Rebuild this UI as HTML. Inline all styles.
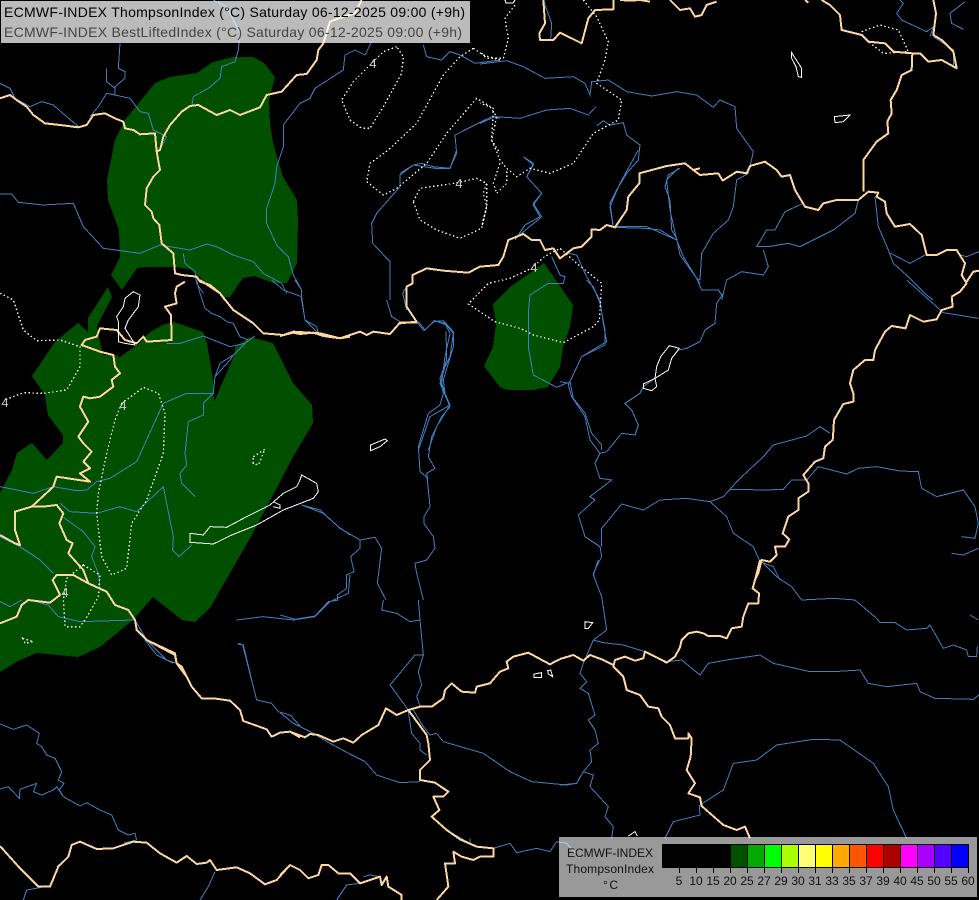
<!DOCTYPE html>
<html><head><meta charset="utf-8"><style>
html,body{margin:0;padding:0;background:#000;width:979px;height:900px;overflow:hidden}
svg{display:block}
path{fill:none;vector-effect:non-scaling-stroke;shape-rendering:crispEdges}
.g path{fill:#005000;stroke:none}
.r path{stroke:#3f7fc4;stroke-width:1}
.b path{stroke:#fdd6a0;stroke-width:2;stroke-linejoin:round}
.w path{stroke:#fff;stroke-width:1}
.d path{stroke:#fff;stroke-width:1.3;stroke-dasharray:1.5 2.5}
text{font-family:"Liberation Sans",sans-serif}
.l{font-size:13px;fill:#ccc;text-anchor:middle}
.t{font-size:12px;fill:#111;text-anchor:middle}
</style></head><body>
<svg width="979" height="900" viewBox="0 0 979 900" xmlns="http://www.w3.org/2000/svg">
<rect width="979" height="900" fill="#000"/>
<g class="g">
<path d="M233,57L253,57 264,63 275,77 269,100 270,123 273,143 283,177 297,200 298,220 297,263 287,283 273,283 255,276 243,278 230,297 222,297 213,287 205,282 192,270 177,267 147,267 137,268 122,290 111,275 120,257 119,230 108,200 107,180 115,140 125,120 155,83 170,77 197,73 213,62Z"/>
<path d="M108,287L112,297 97,326 99,337 103,355 113,355 120,357 137,345 150,332 163,325 173,322 203,332 207,343 213,380 214,402 235,354 235,347 250,337 273,343 293,383 312,405 313,423 293,457 253,533 210,608 195,622 182,620 153,597 133,620 100,647 78,657 37,653 20,660 0,672 0,493 12,470 17,453 32,443 47,460 63,443 63,435 48,415 45,395 32,376 55,342 78,323 88,332 88,318Z"/>
<path d="M544,263L573,305 570,327 563,347 560,367 548,387 533,390 508,390 500,387 484,366 493,347 496,323 493,304 510,287 533,271Z"/>
</g>

<g class="r">
<g transform="scale(.33333)">
<path d="M640,0L680,20 720,100 715,150 705,185 665,200 660,235 625,265 580,290 575,320"/>
<path d="M0,250L30,265 45,295 90,320 125,305 160,315 235,380"/>
<path d="M360,130L355,205 375,215 375,235 345,260 345,285 320,280 295,320 270,350"/>
<path d="M320,205L320,245 345,265"/>
<path d="M345,285L390,295 420,335 445,340 460,390 500,410 480,450"/>
<path d="M0,582L35,582 55,607 130,615 220,610 250,680 310,745 420,760 480,735 570,750 620,732 650,740 700,765 760,785 790,820 845,850 860,880"/>
<path d="M550,760L555,790 585,815 590,850 610,880"/>
<path d="M1115,125L1095,165 1065,150 1035,165 1030,210 945,265 930,295 900,310 850,375 850,440 830,500 825,550 800,625 800,670 830,735 865,770 880,825 905,870 905,900"/>
<path d="M1270,135L1280,170 1325,180 1350,155 1380,165 1425,190 1500,180"/>
<path d="M1500,355L1475,350 1430,372 1365,405 1370,460 1350,505 1300,500 1265,490 1240,495 1200,525 1200,560 1130,640 1115,670 1118,730 1170,785 1170,900"/>
</g>
<g transform="translate(480 0) scale(.33333)">
<path d="M0,192L80,182 130,200 195,235 280,230 315,250 330,285 335,245 385,240 440,275 515,288 590,275 650,285 700,322 720,300 765,320 770,385 820,455 805,520 770,540 760,620 745,660 700,700 665,760 660,840 650,835 600,765 590,715 575,690 570,600 555,560 565,525 600,505"/>
<path d="M0,370L45,350 120,355 200,330 270,325 325,345 348,320"/>
<path d="M350,378L370,362 390,375 430,368 440,405 480,435 475,480 440,520 410,570 390,610 400,680"/>
<path d="M400,680L500,680 590,720"/>
<path d="M110,712L185,650 160,610 185,580 140,530 160,490 130,470"/>
<path d="M190,0L215,70 212,115"/>
<path d="M1135,600L1125,640 1060,690 960,740 925,730 865,740 830,740 860,690 885,690 915,635 965,612"/>
<path d="M850,750L865,800 850,825 785,815 740,840 725,900"/>
<path d="M650,835L665,870 715,870 725,885"/>
<path d="M1185,590L1195,680 1225,750 1240,790 1285,830 1340,885 1360,900"/>
<path d="M1232,760L1290,790 1335,765"/>
<path d="M1440,765L1460,770 1497,755"/>
<path d="M1260,0L1270,10 1250,40 1265,60 1340,95 1360,80 1350,110"/>
<path d="M1455,5L1410,40 1415,70 1450,88"/>
<path d="M1360,110L1420,150 1420,200"/>
</g>
<g transform="translate(400 150) scale(.33333)">
<path d="M0,70L40,45 105,55 150,55 170,0"/>
<path d="M370,20L400,45 380,80 425,130 400,165 420,200 375,225 345,270"/>
<path d="M455,320L480,375 495,380 490,400 445,400 390,435 385,490 385,590 400,675 470,712 510,695"/>
<path d="M505,310L530,315 555,370 580,415 600,450 610,520 620,575 545,620 510,695 520,745 555,790 575,850 605,885 605,900"/>
<path d="M20,410L8,430 20,480"/>
<path d="M55,515L75,540 100,515 130,512 160,545 160,590 130,690 135,730 150,765 90,800 55,900"/>
<path d="M100,512L135,520 150,550 135,620 125,700 135,730"/>
<path d="M150,765L110,830 85,900"/>
<path d="M640,232L630,170 660,100 715,0"/>
<path d="M640,232L735,235 780,240 830,270 850,320 890,385 900,400"/>
<path d="M830,270L810,180 800,90 835,55"/>
</g>
<g transform="translate(560 280) scale(.33333)">
<path d="M490,40L470,70 465,130 435,150 420,185 380,205 355,210 335,235 325,270 285,295 250,320 240,340 195,370 215,390 235,435 225,465 185,460 140,515 120,520 90,480 75,410 35,350 25,315 65,230 135,195 135,150 120,70 100,20 80,0"/>
<path d="M120,520L105,550 120,595 155,600 90,650 105,660 55,705 75,770 120,800 125,830 100,880 105,900"/>
<path d="M125,800L125,745 185,672 250,690 300,660 380,655 450,665 490,650 535,600 610,530 640,495 740,468 780,440 810,460"/>
<path d="M450,665L500,710 520,760 580,800 600,845 640,860 660,900"/>
<path d="M510,628L620,630 670,628 695,600 740,600 775,560 860,582 895,565 950,560 1020,573 1075,575 1085,625 1130,650 1210,630 1245,680 1255,730 1245,775 1205,770"/>
<path d="M1175,820L1210,825 1255,805"/>
<path d="M1040,0L1130,80 1150,98 1255,115"/>
<path d="M0,305L25,310"/>
</g>
<g transform="translate(560 560) scale(.33333)">
<path d="M115,0L100,45 125,110 140,210 100,240 70,310 60,340 80,365 60,385 85,400 105,465 85,480 105,510 115,550 90,570 95,605 70,635 50,670 0,675"/>
<path d="M100,240L130,248 190,255 255,275 320,305 365,300 420,345 445,310 500,300 600,285 640,310 750,335 820,335 900,330 925,370 980,380 1070,370 1080,395 1125,415 1240,418 1257,405"/>
<path d="M605,5L650,50 695,80 725,120 820,115 885,120 950,175 960,188 1005,188 1040,210 1100,205 1110,195 1150,265 1180,255 1220,270 1225,290 1250,290 1252,260"/>
<path d="M1230,165L1255,180"/>
<path d="M70,635L100,645 90,680 145,740 135,770 160,800 155,835"/>
<path d="M420,735L490,690 520,610 590,600 650,555 760,538 840,540 940,610 985,680 1000,750 1040,835"/>
<path d="M418,735L420,765 340,785 315,835"/>
</g>
<g transform="translate(280 300) scale(.33333)">
<path d="M65,0L75,60 115,100"/>
<path d="M320,0L335,50 360,65"/>
<path d="M412,68L432,92 465,62 500,75 520,100 510,170 495,200 480,250 510,320 485,350 455,410 445,470 465,505 440,520 450,620 432,650 432,670 460,710 465,745 440,780 405,790 410,820 430,900"/>
<path d="M498,95L500,180 480,235 490,280 480,315 445,340 415,440 420,515 445,535"/>
<path d="M65,615L130,640 180,685 240,720 285,712 305,745 292,850 318,900"/>
<path d="M240,720L240,745 212,770 222,815 200,825 200,865 172,885 172,900"/>
</g>
<g transform="translate(0 280) scale(.33333)">
<path d="M0,620L100,640 160,620 230,632 260,630 290,605 330,595 410,545 460,435 490,370 560,340 640,340 645,290 660,250 700,225 745,180"/>
<path d="M640,340L610,370 610,405 565,425 555,520 560,555 540,580 545,610 585,650"/>
<path d="M500,190L540,190 610,168 690,200 735,190 765,168"/>
<path d="M645,290L690,240 700,225"/>
<path d="M0,965L30,980 65,960"/>
<path d="M0,770L60,800 120,840 160,880"/>
<path d="M180,670L210,695 290,700 360,680 410,695 490,620 520,770 518,810 537,830 575,795"/>
<path d="M190,712L250,755 285,800 275,830 295,880 300,925"/>
<path d="M90,960L145,975 175,1010 240,1025 405,1020"/>
<path d="M1050,885L1045,940 990,965 945,1010 880,1020 790,1010 710,1020"/>
<path d="M715,1090L730,1095 755,1200"/>
<path d="M905,675L960,690 1015,740 1050,765"/>
<path d="M405,1020L440,1080 500,1140 530,1150"/>
<path d="M590,0L600,40 615,85 635,100 660,110 680,125 700,130 720,170 745,180"/>
<path d="M815,0L850,30 905,50 915,120 950,140 955,160"/>
<path d="M885,0L905,30"/>
</g>
<g transform="translate(0 640) scale(.33333)">
<path d="M435,0L470,45 520,70"/>
<path d="M712,12L728,15 770,180 815,190 835,215 870,225 900,258"/>
<path d="M0,252L40,268 80,255 118,280 110,310 125,320 140,345 165,355 185,395 175,420 192,430 178,450 190,470 240,498 260,488 300,510 335,525 355,570 385,585 405,580 410,600 370,610"/>
<path d="M0,447L25,440 58,475 60,448 110,430 100,455 125,465 160,450 170,440 190,470"/>
<path d="M170,680L205,650"/>
<path d="M70,780L80,750 125,742"/>
<path d="M600,780L625,740 645,695"/>
</g>
<g transform="translate(280 600) scale(.33333)">
<path d="M0,45L45,58 105,48 145,5 175,0"/>
<path d="M310,0L305,30 350,40 390,65 420,60 415,0"/>
<path d="M420,60L430,165 405,165 330,255 385,330"/>
<path d="M430,165L415,215 425,255 410,290 420,318"/>
<path d="M0,338L40,370 100,400 150,430 215,465 255,485 290,525 360,548 420,545"/>
<path d="M385,335L395,400 420,430 420,450 440,465"/>
<path d="M400,330L430,380 450,405 470,400 490,425 610,460 690,515 755,545 860,555 890,550 900,530"/>
<path d="M460,590L478,630 455,650 500,690 570,730 570,715"/>
<path d="M640,745L690,730 710,758 770,745 810,755 830,725 860,730 900,775"/>
<path d="M250,830L270,825 300,830"/>
<path d="M170,900L200,855 240,850"/>
</g>
</g>

<g class="d">
<g transform="scale(.33333)">
<path d="M1190,140L1150,155 1100,205 1060,245 1025,300 1050,360 1085,385 1110,385 1150,320 1205,220 1210,170Z"/>
<path d="M1420,145L1380,170 1330,225 1250,370 1165,450 1110,490 1100,545 1150,585 1190,565 1280,490 1340,400 1430,295 1480,325 1475,420 1500,460"/>
<path d="M1420,145L1450,165 1500,180"/>
</g>
<g transform="translate(480 0) scale(.33333)">
<path d="M105,15L75,55 85,115 70,175 20,175 0,155"/>
<path d="M310,0L350,50 385,125 375,180 350,250 425,300 415,360 340,400 280,490 210,520 150,505 110,530 80,505 60,480 35,420 50,350 30,320 0,310"/>
<path d="M60,490L40,550 50,580 80,550 80,510"/>
<path d="M0,540L20,550 20,620 5,680"/>
<path d="M1145,95L1200,75 1255,90 1285,155 1210,160 1165,125"/>
</g>
<g transform="translate(400 150) scale(.33333)">
<path d="M40,155L60,115 175,98 230,85 260,100 250,130 260,170 245,235 180,265 110,240 60,210Z"/>
<path d="M433,320L395,355 330,385 265,400 205,462 285,515 360,535 400,555 490,578 580,530 598,510 605,400 530,340 480,295Z"/>
</g>
<g transform="translate(0 280) scale(.33333)">
<path d="M0,40L40,60 70,150 110,182 180,180 240,200 240,260 200,330 130,340 70,338 15,360"/>
<path d="M365,370L345,420 320,520 295,640 290,700 305,830 335,885 380,865 395,730 440,660 490,520 495,400 475,340 430,322Z"/>
<path d="M760,530L795,508 775,555 760,550Z"/>
<path d="M250,855L300,885 295,950 255,1020 240,1040 195,1040 190,960 200,895Z"/>
<path d="M68,1075L100,1085 75,1090Z"/>
</g>
</g>

<g class="b">
<g transform="scale(.33333)">
<path d="M0,295L30,285 50,300 80,320 100,345 135,370 180,375 235,382 260,375 280,345 315,340 345,355 370,365 375,385 400,390 420,403 465,400 470,455 478,500 480,510 460,530 440,565 435,615 455,635 460,655 478,675 485,730 520,760 525,820 545,825 590,830 600,845 630,855 660,880 675,900"/>
<path d="M470,455L480,450 490,410 510,375 545,335 570,318 595,315 650,345 690,330 720,345 780,322 800,285 845,275 890,225 920,222 950,180 955,150 970,130 990,65 1030,50 1065,40 1085,0"/>
</g>
<g transform="translate(0 280) scale(.33333)">
<path d="M555,5L530,20 525,40 530,70 495,80 513,105 515,180 440,185 430,170 410,190 375,180 350,150 300,145 290,170 255,180 245,195 300,215 340,225 345,260 360,280 335,300 340,320 300,350 270,355 250,350 240,380 265,425 235,470 250,490 275,515 250,545 270,565 240,580 270,605 170,590 160,620 95,680 45,695 45,750 60,795 45,790 0,765"/>
<path d="M95,680L130,680 170,675 190,700 178,730 200,780 218,790 205,820 250,870 265,910 320,935 345,975 385,990 405,1020 410,1050 440,1080 525,1125 530,1150 560,1190 565,1200"/>
<path d="M265,910L220,885 170,885 158,900 180,945 150,968 85,960 65,975 50,1010 0,1030"/>
<path d="M600,0L660,40 700,90 760,130 790,160 850,165 880,155 960,160 1020,175 1050,170"/>
</g>
<g transform="translate(280 300) scale(.33333)">
<path d="M0,108L40,98 60,102 100,98 130,108 180,115 240,95 260,105 280,95 330,102 360,68 412,68"/>
</g>
<g transform="translate(400 150) scale(.33333)">
<path d="M0,520L50,515 20,470 20,410 38,400 38,375 80,355 130,362 205,368 240,350 295,345 310,320 325,270 370,252 395,270 420,270 435,300 460,295 480,325 520,295 545,290 575,260 575,238 600,240 620,225 645,232 680,180 685,140 718,100 718,70 800,48 855,40 880,60 900,55"/>
</g>
<g transform="translate(480 0) scale(.33333)">
<path d="M615,490L640,510 660,525 715,520 728,542 770,515 800,520 810,498 855,485 890,510 905,530 930,525 945,570 975,620 1015,630 1030,610 1070,600 1135,600 1165,575 1195,578 1190,590 1215,605 1220,640 1245,680 1290,672 1325,705 1340,765 1370,765 1400,750 1430,750 1455,790 1445,825 1460,850 1440,875 1415,890"/>
<path d="M1460,845L1480,815 1497,812"/>
<path d="M1150,575L1150,480 1190,425 1225,400 1222,365 1235,340 1232,300 1250,270 1265,225 1295,210 1297,160 1240,155 1215,130 1165,125 1145,105 1085,90 1080,45 1050,15 1025,0"/>
<path d="M1297,160L1320,160 1345,185 1385,180 1430,205 1420,155 1385,120 1360,105 1368,40 1360,0"/>
<path d="M570,0L600,30 630,25 645,50 665,45 680,15 710,5"/>
<path d="M400,0L400,28 345,30 325,55 305,130 275,115 240,98 220,120 180,120 178,100 195,70 190,0"/>
<path d="M420,0L450,2 480,0 510,5"/>
<path d="M975,0L985,8"/>
</g>
<g transform="translate(560 280) scale(.33333)">
<path d="M1175,50L1178,80 1145,90 1130,118 1090,125 1050,105 1037,145 995,138 975,155 945,210 940,240 915,240 880,270 870,310 880,340 880,365 850,372 822,420 820,455 818,480 795,500 790,535 765,545 730,585 745,610 745,635 715,655 715,690 685,710 668,760 688,778 675,800 645,800 650,825 630,845 605,840 595,880 585,900"/>
</g>
<g transform="translate(560 560) scale(.33333)">
<path d="M600,0L585,60 578,85 597,100 595,130 565,130 550,170 545,200 515,205 500,235 480,228 445,228 430,220 410,215 385,220 365,240 360,262 345,290 320,308 290,292 255,275 250,295 225,302 195,290 165,300 160,320 190,350 200,390 240,405 265,440 295,445 305,470 330,495 345,535 385,535 385,520 395,535 392,590 380,630 405,670 385,700 420,712 425,738 490,795 530,810 555,800 570,835"/>
<path d="M160,315L125,298 90,285 70,302 40,285 0,297"/>
</g>
<g transform="translate(280 600) scale(.33333)">
<path d="M840,177L810,193 745,158 700,170 680,185 685,205 660,215 630,250 590,260 585,278 545,275 515,250 495,270 490,295 455,320 420,320 385,330 350,345 318,325 295,375 245,405 220,428 190,415 160,425 115,405 90,402 75,412 30,395 0,398"/>
<path d="M385,330L440,405 445,430 450,480 420,510 420,540 465,548 505,575 490,590 460,590 478,630 455,650 500,690 540,718 590,740 640,745 640,770 600,770 580,780 545,770 520,755 525,790 495,790 505,860 470,900"/>
<path d="M0,825L30,795 60,810 85,835 115,825 125,795 145,795 175,820 210,820 240,850 300,830 305,855 320,830 325,860 365,885 365,900"/>
</g>
<g transform="translate(0 640) scale(.33333)">
<path d="M440,0L525,40 530,70 545,80 560,110 575,140 605,175 640,175 690,182 720,210 730,243 800,268 815,290 840,278 870,275 900,292"/>
<path d="M0,618L60,685 115,740 150,740 175,680 205,650 215,615 240,605 290,627 340,625 400,605 440,608 480,640 530,668 560,648 590,672 620,668 630,660 650,690 710,682 750,700 795,733 830,720 870,675 900,690"/>
</g>
</g>

<g class="w">
<path d="M505,0L506,3 513,3 515,0"/>
<g transform="translate(0 280) scale(.33333)">
<path d="M400,35L420,45 415,80 385,120 375,145 400,185 405,195 375,190 355,185 355,125 350,110 370,80 375,55Z"/>
<path d="M905,585L950,610 955,635 940,655 850,690 770,735 695,765 640,792 570,787 570,760 610,765 630,740 680,742 740,710 810,675 850,640 890,620 900,600Z"/>
<path d="M820,665L840,675 840,685 820,680"/>
</g>
<g transform="translate(280 300) scale(.33333)">
<path d="M272,435L315,417 322,422 300,440 272,452Z"/>
</g>
<g transform="translate(480 0) scale(.33333)">
<path d="M935,158L965,205 965,232 955,230 948,200 935,175Z"/>
<path d="M1063,350L1110,345 1090,365 1065,368Z"/>
</g>
<g transform="translate(560 280) scale(.33333)">
<path d="M328,197L358,205 335,235 325,270 285,295 290,320 275,332 250,325 250,312 285,295 290,260 302,230Z"/>
</g>
<g transform="translate(560 560) scale(.33333)">
<path d="M75,185L98,188 85,205 75,205Z"/>
<path d="M205,828L225,815 232,828"/>
</g>
<g transform="translate(280 600) scale(.33333)">
<path d="M762,222L785,218 785,232 762,232Z"/>
<path d="M803,212L812,210 818,230 805,222Z"/>
</g>
</g>

<text class="l" x="373" y="68">4</text>
<text class="l" x="459" y="188">4</text>
<text class="l" x="534" y="272">4</text>
<text class="l" x="5" y="407">4</text>
<text class="l" x="123" y="410">4</text>
<text class="l" x="65" y="597">4</text>

<rect x="1" y="1" width="469" height="42" fill="#fff" fill-opacity=".735"/>
<text x="4" y="17" font-size="14" fill="#000" textLength="461" lengthAdjust="spacing">ECMWF-INDEX ThompsonIndex (°C) Saturday 06-12-2025 09:00 (+9h)</text>
<text x="4" y="37" font-size="14" fill="#444" textLength="458" lengthAdjust="spacing">ECMWF-INDEX BestLiftedIndex (°C) Saturday 06-12-2025 09:00 (+9h)</text>

<rect x="559" y="837" width="418" height="60" fill="#fff" fill-opacity=".6"/>
<text x="567" y="857" font-size="12" fill="#111" textLength="86" lengthAdjust="spacing">ECMWF-INDEX</text>
<text x="566" y="873" font-size="12" fill="#111" textLength="88" lengthAdjust="spacing">ThompsonIndex</text>
<text x="603" y="889" font-size="12" fill="#111" textLength="15" lengthAdjust="spacing">°C</text>

<rect x="662" y="844" width="68" height="23" fill="#000"/>
<rect x="730" y="844" width="17" height="23" fill="#005000"/>
<rect x="747" y="844" width="17" height="23" fill="#00aa00"/>
<rect x="764" y="844" width="17" height="23" fill="#00ff00"/>
<rect x="781" y="844" width="17" height="23" fill="#aaff00"/>
<rect x="798" y="844" width="17" height="23" fill="#ffff77"/>
<rect x="815" y="844" width="17" height="23" fill="#ffff00"/>
<rect x="832" y="844" width="17" height="23" fill="#ffaa00"/>
<rect x="849" y="844" width="17" height="23" fill="#ff5500"/>
<rect x="866" y="844" width="17" height="23" fill="#ff0000"/>
<rect x="883" y="844" width="17" height="23" fill="#aa0000"/>
<rect x="900" y="844" width="17" height="23" fill="#ff00ff"/>
<rect x="917" y="844" width="17" height="23" fill="#aa00ff"/>
<rect x="934" y="844" width="17" height="23" fill="#5500ff"/>
<rect x="951" y="844" width="17" height="23" fill="#0000ff"/>
<rect x="662.5" y="844.5" width="306" height="23" fill="none" stroke="#000"/>
<path stroke="#000" style="stroke-width:1" d="M679.5,844V873M696.5,844V873M713.5,844V873M730.5,844V873M747.5,844V873M764.5,844V873M781.5,844V873M798.5,844V873M815.5,844V873M832.5,844V873M849.5,844V873M866.5,844V873M883.5,844V873M900.5,844V873M917.5,844V873M934.5,844V873M951.5,844V873M968.5,844V873"/>
<text class="t" x="679" y="885">5</text><text class="t" x="696" y="885">10</text><text class="t" x="713" y="885">15</text><text class="t" x="730" y="885">20</text><text class="t" x="747" y="885">25</text><text class="t" x="764" y="885">27</text><text class="t" x="781" y="885">29</text><text class="t" x="798" y="885">30</text><text class="t" x="815" y="885">31</text><text class="t" x="832" y="885">33</text><text class="t" x="849" y="885">35</text><text class="t" x="866" y="885">37</text><text class="t" x="883" y="885">39</text><text class="t" x="900" y="885">40</text><text class="t" x="917" y="885">45</text><text class="t" x="934" y="885">50</text><text class="t" x="951" y="885">55</text><text class="t" x="968" y="885">60</text>
</svg>
</body></html>
